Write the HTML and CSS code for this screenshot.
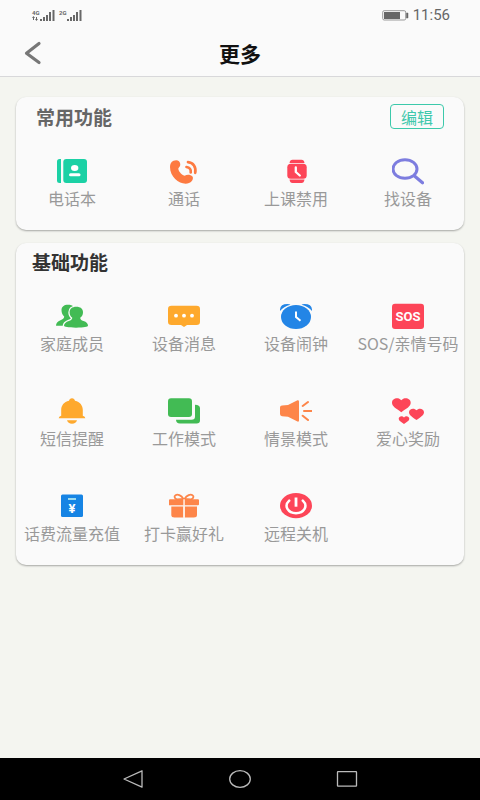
FILE: index.html
```html
<!DOCTYPE html>
<html lang="zh-CN">
<head>
<meta charset="utf-8">
<meta name="viewport" content="width=device-width, initial-scale=1">
<title>更多</title>
<link rel="stylesheet" href="styles.css">
</head>
<body>
<div class="status">
  <div class="signals">
    <div class="signal">
      <span class="net"><span>4G</span>
        <svg width="6" height="5" viewBox="0 0 6 5" aria-hidden="true"><path d="M0 2h3L1.500 0zM3 3h3L4.500 5zM1 2h1v2H1zM4 1h1v2H4z" fill="#666"/></svg>
      </span>
      <svg width="15" height="11" viewBox="0 0 15 11" aria-hidden="true"><path d="M0 9h2v2H0zM3 7h2v4H3zM6 5h2v6H6zM9 2h2v9H9zM12.500 0h2v11h-2z" fill="#686868"/></svg>
    </div>
    <div class="signal">
      <span class="net"><span>2G</span></span>
      <svg width="15" height="11" viewBox="0 0 15 11" aria-hidden="true"><path d="M0 9h2v2H0zM3 7h2v4H3zM6 5h2v6H6zM9 2h2v9H9zM12.500 0h2v11h-2z" fill="#686868"/></svg>
    </div>
  </div>
  <div class="clock">
    <svg width="27" height="11" viewBox="0 0 27 11" aria-hidden="true"><rect x=".7" y=".7" width="23" height="9.300" rx="1.500" fill="none" stroke="#999"/><path d="M2 2h16v7H2z" fill="#666"/><path d="M24.500 3H26v5h-1.500z" fill="#666" stroke="#666" stroke-width=".5"/></svg>
    <span>11:56</span>
  </div>
</div>
<header class="bar">
  <button class="back" type="button" aria-label="返回"><svg width="18" height="24" viewBox="0 0 18 24"><path d="M15 2.500 2.500 12.200 15 21.500" fill="none" stroke="#777" stroke-width="3.200" stroke-linecap="round" stroke-linejoin="round"/></svg></button>
  <h1>更多</h1>
</header>
<main>
  <section class="card common">
    <div class="card-head"><h2>常用功能</h2><button class="edit" type="button">编辑</button></div>
    <div class="tiles">
      <a class="tile" href="#"><svg viewBox="0 0 32 32"><path d="M3.500 4H5v24H3.500Q1 28 1 25.500v-19Q1 4 3.500 4z" fill="#1bd1a5"/><rect x="7.300" y="4" width="23.700" height="24" rx="3" fill="#1bd1a5"/><ellipse cx="18.700" cy="13" rx="3.700" ry="3" fill="#fff"/><rect x="13" y="18.200" width="11.500" height="3" rx="1.500" fill="#fff"/></svg><span>电话本</span></a>
      <a class="tile" href="#"><svg viewBox="0 0 32 32"><path d="M5.500 5.800Q9 4.500 11 6.300c2 2.500 1.700 5-.6 6.900-.6 2 2.600 6.300 6.300 7.600 2-1.500 5.800-1.500 7.800.6 1.300 2-.5 5.500-3.500 6.600C14 31 2 23.500 2 12 2 9 3 7 5.500 5.800z" fill="#fd7a41"/><path d="M18.500 12c3 .5 4.800 2.300 4.200 5.500M20 7.200c5.300.5 8.300 4.800 7.200 10.600" fill="none" stroke="#fd7a41" stroke-width="2.700" stroke-linecap="round"/></svg><span>通话</span></a>
      <a class="tile" href="#"><svg viewBox="0 0 32 32"><path d="M9.500 8Q10 4.700 12.500 4.700h9Q24 4.700 24.500 8zM9.500 24.500Q10 28 12.500 28h9q2.500 0 3-3.500z" fill="#fd4558"/><rect x="7.300" y="8.800" width="19.400" height="15" rx="3.500" fill="#fd4558"/><path d="M15.800 12.500V17l4 3.500" fill="none" stroke="#fff" stroke-width="2.300" stroke-linejoin="round" stroke-linecap="round"/></svg><span>上课禁用</span></a>
      <a class="tile" href="#"><svg viewBox="0 0 32 32"><ellipse cx="13" cy="14" rx="12" ry="9.300" fill="none" stroke="#7d7ddf" stroke-width="3"/><path d="M22.500 21l8 6.800" stroke="#7d7ddf" stroke-width="3.200" stroke-linecap="round"/></svg><span>找设备</span></a>
    </div>
  </section>
  <section class="card">
    <div class="card-head"><h2>基础功能</h2></div>
    <div class="tiles">
      <a class="tile" href="#"><svg viewBox="0 0 32 32"><g fill="#42bb54"><path d="M5.500 10c0-3.300 2.500-5.300 6.500-5.300 2.500 0 4 .5 5 1.500l-2 13L7.500 25.700H0C0 23 1.500 21.500 4.500 20.200c2.200-.9 3.700-1.700 3.700-3.700C6.500 15 5.500 12.700 5.500 10z"/></g><path d="M20.300 6.800c4.300 0 6.700 2.200 6.700 5.400 0 2.300-1 4.300-2.800 5.600.1 1.700 1 2.500 3.300 3.200 3 1 4.500 2.500 4.500 4.800 0 1-4 1.900-12 1.900S8 26.800 8 25.800c0-2.300 2-3.800 4.800-4.800 2.200-.7 3.400-1.500 3.500-3.200-1.700-1.300-2.700-3.300-2.700-5.600 0-3.200 2.400-5.400 6.700-5.400z" fill="#42bb54" stroke="#fafafa" stroke-width="2.600" paint-order="stroke"/></svg><span>家庭成员</span></a>
      <a class="tile" href="#"><svg viewBox="0 0 32 32"><path d="M3.500 5.700h25Q32 5.700 32 9v12.700Q32 25 28.500 25H19l-3 2-3-2H3.500Q0 25 0 21.700V9q0-3.300 3.500-3.300z" fill="#fea92d"/><g fill="#fff"><circle cx="8" cy="15.700" r="1.900"/><circle cx="16" cy="15.700" r="1.900"/><circle cx="24" cy="15.700" r="1.900"/></g></svg><span>设备消息</span></a>
      <a class="tile" href="#"><svg viewBox="0 0 32 32"><path d="M0 11Q-.5 4 7.500 4q2 0 3 .8Q3.500 6.500 0 11zM32 11q.5-7-7.500-7-2 0-3 .8Q28.500 6.500 32 11z" fill="#2385e6"/><ellipse cx="16" cy="17" rx="15" ry="12" fill="#2385e6"/><path d="M16 11.500V17l4.500 3.800" fill="none" stroke="#fff" stroke-width="2"/></svg><span>设备闹钟</span></a>
      <a class="tile" href="#"><svg viewBox="0 0 32 32"><rect y="3.700" width="32" height="25.300" rx="3" fill="#fd4558"/><text class="sos" x="16" y="21" text-anchor="middle">SOS</text></svg><span>SOS/亲情号码</span></a>
      <a class="tile" href="#"><svg viewBox="0 0 32 32"><path d="M16 3.300c1.700 0 2.600 1 3 2.400 5 1.300 7.800 4.600 7.800 9.300v5.800q2.500.8 2.500 2.500h-26.600q0-1.700 2.500-2.500V15c0-4.700 2.800-8 7.800-9.300.4-1.400 1.300-2.400 3-2.400zM11 25.300h10q-1 3.400-5 3.400t-5-3.400z" fill="#fea92d"/></svg><span>短信提醒</span></a>
      <a class="tile" href="#"><svg viewBox="0 0 32 32"><rect y="3.300" width="24" height="18.700" rx="3" fill="#42bb54"/><path d="M27 9.700q5 0 5 3.500v12q0 3.300-3.500 3.300H12q-4 0-4-3.700h15.500q3.500 0 3.500-3.300z" fill="#42bb54"/></svg><span>工作模式</span></a>
      <a class="tile" href="#"><svg viewBox="0 0 32 32"><path d="M2 10.500 8 10l9.500-4.800Q19 5 19 6.500v19q0 1.500-1.500 1L8 21.700l-6-.5Q0 21 0 19v-6.500q0-2 2-2z" fill="#fd8549"/><path d="M22.700 11 28 7M24 16h7.500M22.700 20.700 28 25" fill="none" stroke="#fd8549" stroke-width="2" stroke-linecap="round"/></svg><span>情景模式</span></a>
      <a class="tile" href="#"><svg viewBox="0 0 32 32"><g fill="#fd4558"><path d="M9.300 17.200C4 13.500 0 11.300 0 7.800 0 3 6.500 1.800 9.300 5.300c2.800-3.500 9.400-2.300 9.400 2.500 0 3.500-4 5.700-9.400 9.400z"/><path d="M24.500 25c-4.300-3-7.500-4.800-7.500-7.700 0-3.800 5.300-4.800 7.500-2 2.200-2.800 7.500-1.800 7.500 2 0 2.900-3.200 4.700-7.500 7.700z"/><path d="M12 29c-3-2-5.300-3.200-5.300-5.200 0-2.600 3.700-3.300 5.300-1.400 1.600-1.900 5.300-1.200 5.300 1.400 0 2-2.300 3.200-5.300 5.200z"/></g></svg><span>爱心奖励</span></a>
      <a class="tile" href="#"><svg viewBox="0 0 32 32"><rect x="5" y="4.500" width="22" height="22.500" rx="1.500" fill="#1684e4"/><path d="M12 9h8" stroke="#bdf0f0" stroke-width="1.600"/><text class="yuan" x="16" y="23" text-anchor="middle">¥</text></svg><span>话费流量充值</span></a>
      <a class="tile" href="#"><svg viewBox="0 0 32 32"><g fill="#fd8549"><path d="M2 9.300h28q1 0 1 1v4q0 1-1 1H1v-5q0-1 1-1zM3.300 16.500h12v10.900H6.500q-3.200 0-3.200-2.500zM16.800 16.500H29v8.400q0 2.500-3.200 2.500h-9z"/></g><path d="M15.500 9C13 5 9.500 4 7.500 5.200S7 9 9 9.300zM16.500 9c2.500-4 6-5 8-3.800S25 9 23 9.300z" fill="none" stroke="#fd8549" stroke-width="1.800"/><path d="M15.300 9.300h1.500v18h-1.500z" fill="#fff0e5"/></svg><span>打卡赢好礼</span></a>
      <a class="tile" href="#"><svg viewBox="0 0 32 32"><ellipse cx="16" cy="15.700" rx="16" ry="12.600" fill="#fd4558"/><path d="M9.200 10.700C3.500 16 8 23.200 16 23.200s12.500-7.200 6.800-12.500" fill="none" stroke="#fff" stroke-width="2.500" stroke-linecap="round"/><path d="M16 7.500v9.200" stroke="#fff" stroke-width="2.800"/></svg><span>远程关机</span></a>
    </div>
  </section>
</main>
<nav class="nav">
  <button type="button" aria-label="后退"><svg viewBox="0 0 24 20"><path d="M3 10 21 1.800V18.200z"/></svg></button>
  <button type="button" aria-label="主页"><svg viewBox="0 0 24 20"><ellipse cx="12" cy="10" rx="10.300" ry="8.300"/></svg></button>
  <button type="button" aria-label="最近任务"><svg viewBox="0 0 24 20"><rect x="2.500" y="2.700" width="19" height="14.500" rx=".5"/></svg></button>
</nav>
</body>
</html>
```

FILE: styles.css
```css
* { box-sizing: border-box; }

body {
  margin: 0;
  min-height: 100vh;
  display: flex;
  flex-direction: column;
  background: #f4f5f0;
  color: #333;
  font-family: "Noto Sans CJK SC", sans-serif;
}

h1, h2 { margin: 0; font-weight: 700; }

button {
  padding: 0;
  border: 0;
  background: none;
  font: inherit;
}

svg { display: block; }

.status {
  display: flex;
  justify-content: space-between;
  align-items: center;
  height: 30px;
  padding: 0 30px 0 32px;
  background: #fafafa;
  color: #666;
}

.signals { display: flex; gap: 4px; }

.signal { display: flex; align-items: flex-end; }

.net {
  display: flex;
  flex-direction: column;
  align-self: flex-start;
  width: 8px;
  font: 700 6px/6px Roboto, sans-serif;
}

.clock {
  display: flex;
  align-items: center;
  gap: 4px;
  font: 15px/20px Roboto, sans-serif;
}

.bar {
  display: grid;
  grid-template-columns: 48px 1fr 48px;
  align-items: center;
  height: 47px;
  border-bottom: 1px solid #d8d8da;
  background: #fafafa;
}

.back { justify-self: end; width: 24px; height: 24px; }

.bar h1 {
  color: #111;
  font-size: 21px;
  line-height: 28px;
  text-align: center;
}

main {
  flex: 1;
  display: flex;
  flex-direction: column;
  gap: 13px;
  padding: 20px 16px;
}

.card {
  padding: 7px 0 21px;
  border-radius: 10px;
  background: #fafafa;
  box-shadow: 0 1px 2px rgba(0, 0, 0, 0.32);
}

.card-head {
  display: flex;
  justify-content: space-between;
  align-items: center;
  min-height: 24px;
  margin-bottom: 26px;
  padding: 0 20px 0 16px;
}

.card h2 { font-size: 19px; line-height: 24px; }

.common .card-head { padding-left: 20px; }

.common h2 { color: #666; }

.edit {
  width: 54px;
  height: 25px;
  border: 1px solid #3cc9ab;
  border-radius: 4px;
  color: #3fc8ac;
  font-size: 16px;
  line-height: 22px;
}

.tiles {
  display: grid;
  grid-template-columns: repeat(4, minmax(0, 1fr));
  row-gap: 41px;
}

.tile {
  display: flex;
  flex-direction: column;
  align-items: center;
  color: #999;
  font-size: 16px;
  line-height: 22px;
  text-decoration: none;
  white-space: nowrap;
}

.tile svg { width: 32px; height: 32px; }

.sos { fill: #fff; font: 700 13px Roboto, sans-serif; }

.yuan { fill: #fff; font: 700 13px Roboto, sans-serif; }

.nav {
  display: grid;
  grid-template-columns: repeat(3, 1fr);
  place-items: center;
  height: 42px;
  padding: 0 80px;
  background: #000;
}

.nav svg {
  width: 24px;
  height: 20px;
  fill: none;
  stroke: #bbb;
  stroke-width: 1.3;
  stroke-linejoin: round;
}
```
